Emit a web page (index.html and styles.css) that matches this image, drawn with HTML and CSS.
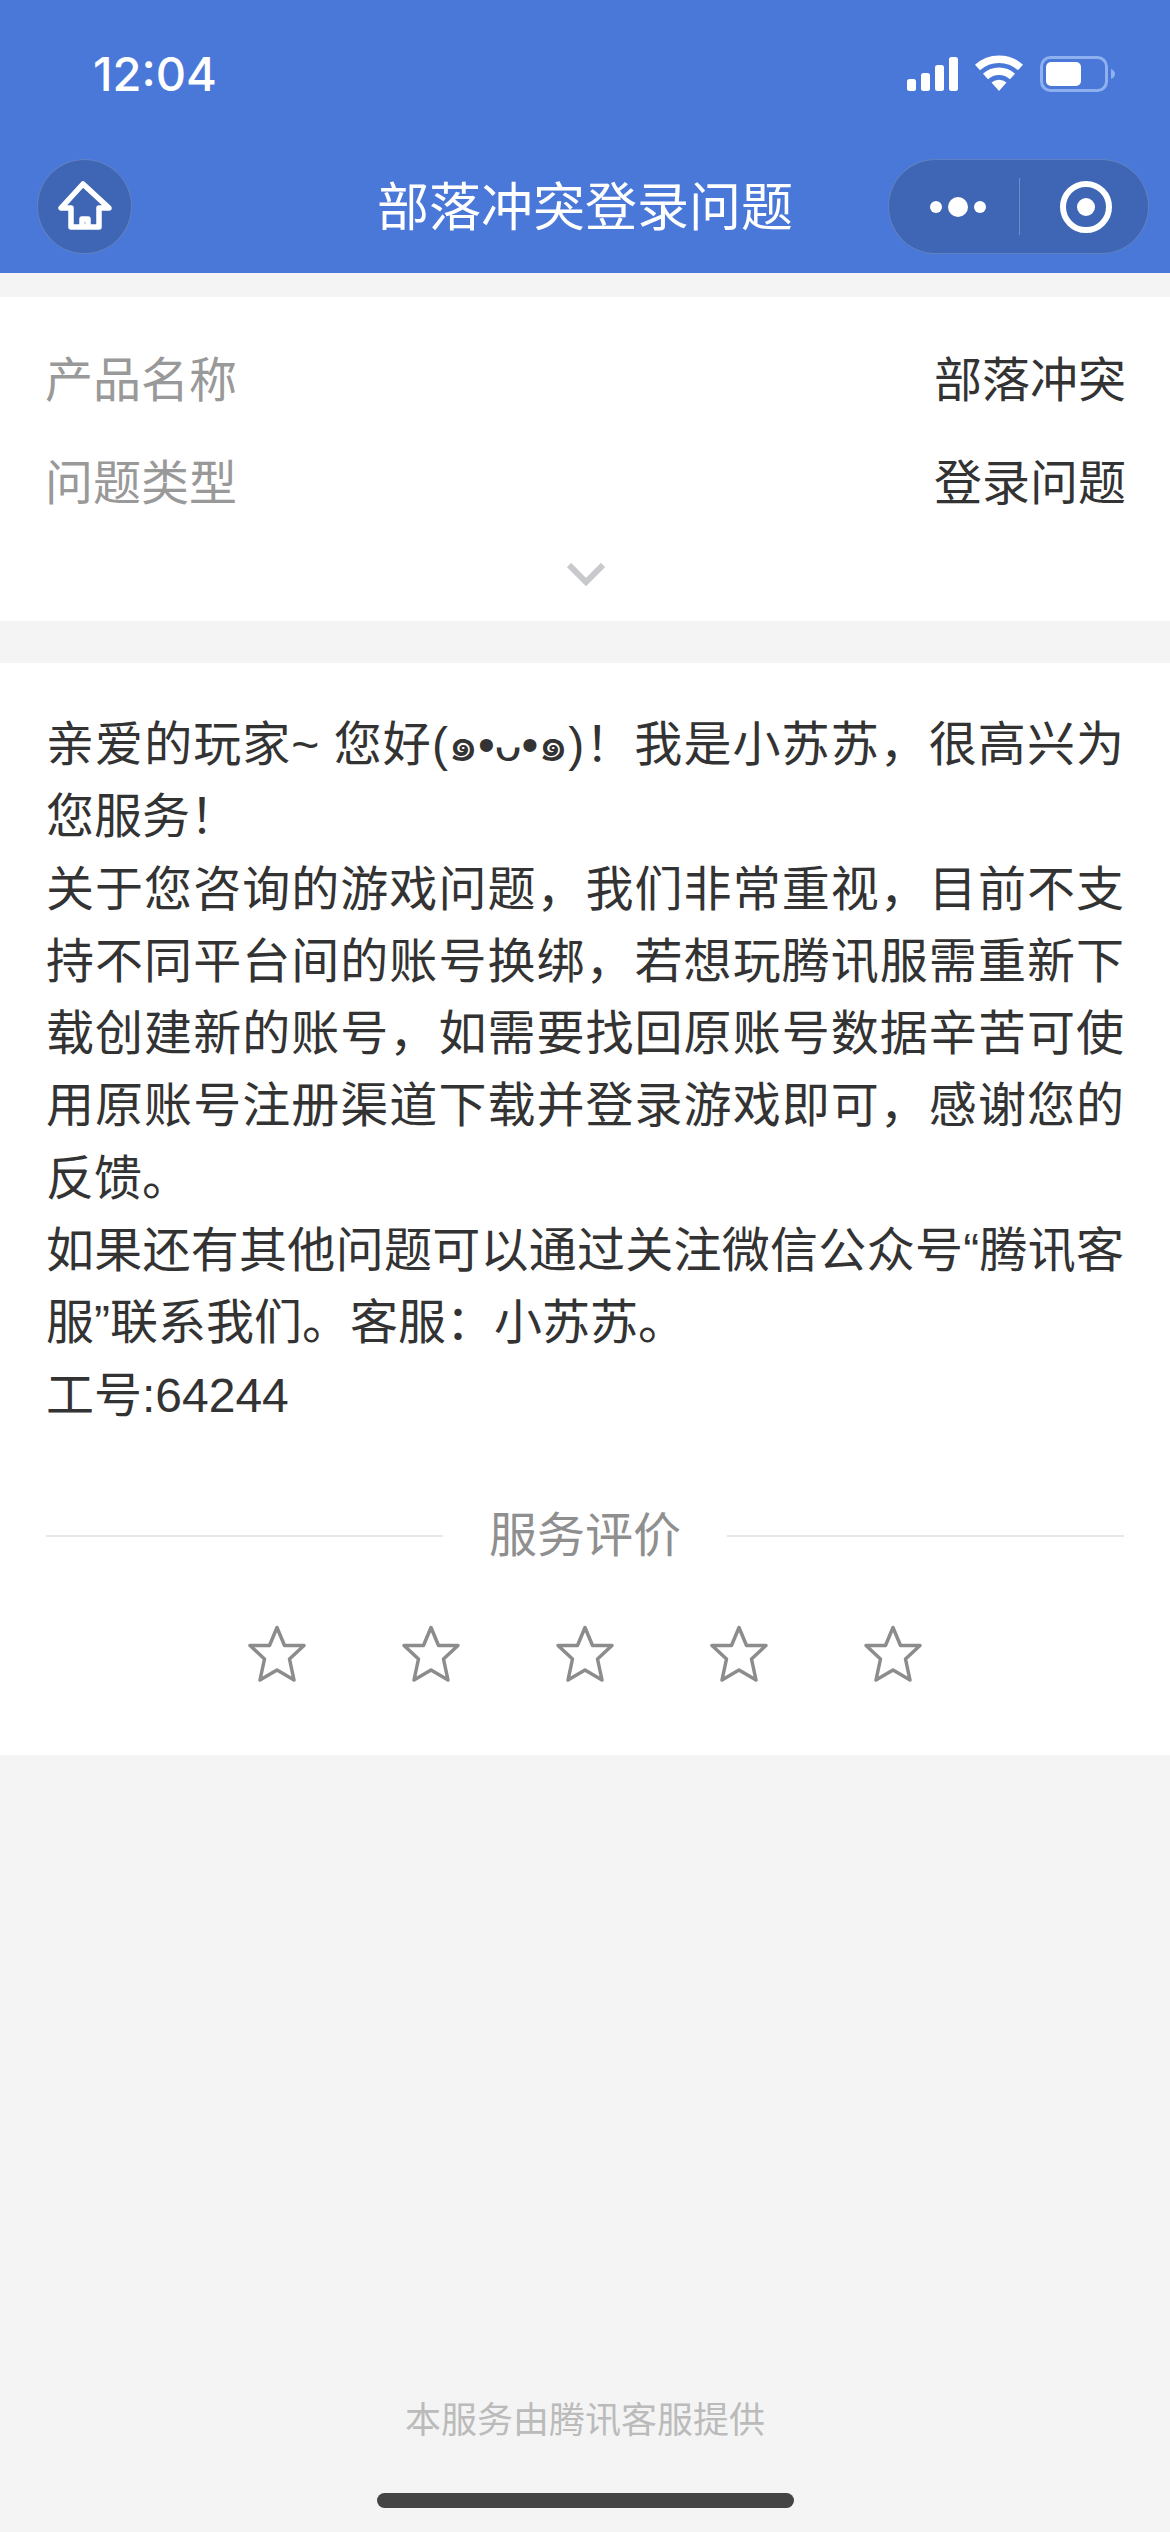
FILE: index.html
```html
<!DOCTYPE html>
<html lang="zh-CN">
<head>
<meta charset="utf-8">
<title>部落冲突登录问题</title>
<link rel="stylesheet" href="styles.css">
</head>
<body>
<header class="header">
  <div class="status">
    <span class="time">12:04</span>
    <div class="status-icons">
      <svg class="signal" width="51" height="34" viewBox="0 0 51 34"><rect x="0" y="22" width="9" height="12" rx="2.5"/><rect x="14" y="16" width="9" height="18" rx="2.5"/><rect x="28" y="8" width="9" height="26" rx="2.5"/><rect x="42" y="0" width="9" height="34" rx="2.5"/></svg>
      <svg class="wifi" width="48" height="36" viewBox="0 0 48 36"><path class="arc" d="M2.5 12.5A32 32 0 0 1 45.500 12.500"/><path class="arc" d="M10.500 21.500A20 20 0 0 1 37.500 21.500"/><path class="wedge" d="M16.500 27.500A12 12 0 0 1 31.500 27.500L24 36Z"/></svg>
      <svg class="battery" width="75" height="36" viewBox="0 0 75 36"><rect class="battery-case" x="1.500" y="1.500" width="65" height="33" rx="9"/><rect class="battery-level" x="6" y="6" width="35" height="24" rx="5"/><path class="battery-nub" d="M71 13C74 14 75 16 75 18C75 20 74 22 71 23Z"/></svg>
    </div>
  </div>
  <nav class="nav">
    <div class="nav-left">
      <div class="home">
        <svg width="54" height="52" viewBox="0 0 54 52"><path d="M25 3L3 27H13V46H41V27H51Z M24 46V38H30V46"/></svg>
      </div>
    </div>
    <h1 class="title">部落冲突登录问题</h1>
    <div class="nav-right">
      <div class="capsule">
        <div class="capsule-part capsule-menu">
          <svg width="56" height="20" viewBox="0 0 56 20"><circle cx="6" cy="10" r="6"/><circle cx="28" cy="10" r="10"/><circle cx="50" cy="10" r="6"/></svg>
        </div>
        <span class="capsule-divider"></span>
        <div class="capsule-part capsule-target">
          <svg width="52" height="52" viewBox="0 0 52 52"><circle class="ring" cx="26" cy="26" r="23"/><circle cx="26" cy="26" r="9"/></svg>
        </div>
      </div>
    </div>
  </nav>
</header>

<section class="card info">
  <div class="info-row"><span class="info-label">产品名称</span><span class="info-value">部落冲突</span></div>
  <div class="info-row"><span class="info-label">问题类型</span><span class="info-value">登录问题</span></div>
  <svg class="chevron" width="38" height="23" viewBox="0 0 38 23"><path d="M2 2L19 19L36 2"/></svg>
</section>

<section class="card answer">
  <div class="answer-text">
    <p>亲爱的玩家~ 您好(๑•ᴗ•๑)！我是小苏苏，很高兴为您服务！</p>
    <p>关于您咨询的游戏问题，我们非常重视，目前不支持不同平台间的账号换绑，若想玩腾讯服需重新下载创建新的账号，如需要找回原账号数据辛苦可使用原账号注册渠道下载并登录游戏即可，感谢您的反馈。</p>
    <p>如果还有其他问题可以通过关注微信公众号“腾讯客服”联系我们。客服：小苏苏。</p>
    <p>工号:64244</p>
  </div>
  <div class="rating-head"><span class="rule"></span><span class="rating-title">服务评价</span><span class="rule"></span></div>
  <div class="stars">
    <svg class="star" viewBox="0 0 62 62"><path d="M31 3.500L38.500 21.500H58L43.500 35L48 56L31 46L14 56L18.500 35L4 21.500H23.500Z"/></svg>
    <svg class="star" viewBox="0 0 62 62"><path d="M31 3.500L38.500 21.500H58L43.500 35L48 56L31 46L14 56L18.500 35L4 21.500H23.500Z"/></svg>
    <svg class="star" viewBox="0 0 62 62"><path d="M31 3.500L38.500 21.500H58L43.500 35L48 56L31 46L14 56L18.500 35L4 21.500H23.500Z"/></svg>
    <svg class="star" viewBox="0 0 62 62"><path d="M31 3.500L38.500 21.500H58L43.500 35L48 56L31 46L14 56L18.500 35L4 21.500H23.500Z"/></svg>
    <svg class="star" viewBox="0 0 62 62"><path d="M31 3.500L38.500 21.500H58L43.500 35L48 56L31 46L14 56L18.500 35L4 21.500H23.500Z"/></svg>
  </div>
</section>

<footer class="footer">
  <p class="footer-text">本服务由腾讯客服提供</p>
  <div class="home-bar"></div>
</footer>
</body>
</html>
```
FILE: styles.css
```css
* { box-sizing: border-box; }
html, body { margin: 0; padding: 0; }
body {
  width: 1170px;
  height: 2532px;
  display: flex;
  flex-direction: column;
  background: #f4f4f4;
  font-family: "Liberation Sans", "Noto Sans CJK SC", sans-serif;
  color: #333;
  overflow: hidden;
}

.header { height: 273px; background: #4a78d8; color: #fff; flex: none; }
.status {
  height: 159px;
  padding: 46px 55px 0 93px;
  display: flex;
  justify-content: space-between;
  align-items: flex-start;
}
.time { font-family: Inter, sans-serif; font-size: 47px; font-weight: 500; line-height: 56px; }
.status-icons { display: flex; align-items: flex-start; padding-top: 9px; }
.signal { fill: #fff; margin-top: 2px; }
.wifi { margin-left: 17px; }
.wifi .arc { fill: none; stroke: #fff; stroke-width: 7.500; }
.wifi .wedge { fill: #fff; }
.battery { margin-left: 17px; margin-top: 1px; }
.battery-case { fill: none; stroke: #8fb0ee; stroke-width: 3; }
.battery-level { fill: #fff; }
.battery-nub { fill: #8fb0ee; }

.nav {
  height: 95px;
  padding: 0 21px;
  display: grid;
  grid-template-columns: 1fr auto 1fr;
  align-items: center;
}
.nav-left { padding-left: 16px; }
.nav-right { display: flex; justify-content: flex-end; }
.home {
  width: 95px;
  height: 95px;
  border-radius: 50%;
  background: #3e66b4;
  border: 1px solid rgba(255, 255, 255, .18);
  display: flex;
  align-items: center;
  justify-content: center;
}
.home path { fill: none; stroke: #fff; stroke-width: 5.500; stroke-linejoin: round; }
.title { margin: 0; padding-top: 3px; font-size: 52px; font-weight: 400; line-height: 72px; color: #fff; }
.capsule {
  width: 261px;
  height: 95px;
  border-radius: 48px;
  background: #3e66b4;
  border: 1px solid rgba(255, 255, 255, .18);
  display: flex;
  align-items: center;
}
.capsule-part { flex: 1; display: flex; justify-content: center; align-items: center; }
.capsule-menu { flex: 0 0 130px; padding-left: 8px; }
.capsule-target { padding-left: 3px; }
.capsule-part svg { fill: #fff; }
.capsule-part .ring { fill: none; stroke: #fff; stroke-width: 6; }
.capsule-divider { width: 1px; height: 57px; background: rgba(255, 255, 255, .25); }

.card { background: #fff; flex: none; }
.info { margin-top: 24px; height: 324px; padding: 48px 44px 0 45px; }
.info-row {
  display: flex;
  justify-content: space-between;
  font-size: 48px;
  line-height: 72px;
  margin-bottom: 31px;
}
.info-label { color: #999; }
.info-value { color: #333; }
.chevron { display: block; margin: 43px auto 0; }
.chevron path { fill: none; stroke: #c8c9cc; stroke-width: 6; }

.answer { margin-top: 42px; height: 1092px; padding: 46px 46px 0; }
.answer-text {
  font-size: 48px;
  line-height: 72.300px;
  text-align: justify;
  color: #333;
}
.answer-text p { margin: 0; }
.rating-head { display: flex; align-items: center; gap: 46px; margin-top: 68px; }
.rule { flex: 1; height: 2px; background: #e8e8e8; }
.rating-title { font-size: 48px; line-height: 72px; color: #8f8f8f; }
.stars { display: flex; justify-content: center; gap: 92px; margin-top: 52px; }
.star { width: 62px; height: 62px; }
.star path { fill: none; stroke: #8c8c8c; stroke-width: 3.500; stroke-linejoin: round; }

.footer { margin-top: auto; display: flex; flex-direction: column; align-items: center; padding-bottom: 24px; }
.footer-text { margin: 0; font-size: 36px; line-height: 50px; color: #bbb; }
.home-bar { width: 417px; height: 15px; border-radius: 8px; background: #444; margin-top: 47px; }
```
